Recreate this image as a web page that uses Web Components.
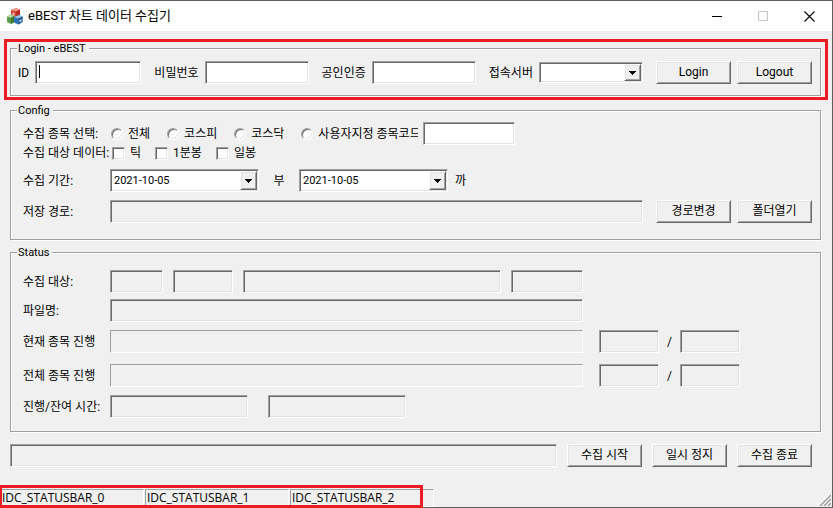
<!DOCTYPE html>
<html lang="ko">
<head>
<meta charset="utf-8">
<title>eBEST 차트 데이터 수집기</title>
<style>
  body {
    margin: 0;
    background: #f0f0f0;
    color: #000;
    font: 12px/16px Roboto, "Noto Sans CJK KR", sans-serif;
  }
</style>
</head>
<body>
<collector-app></collector-app>

<script>
// bevels shared by every classic control
const BEVEL = `
  *, :host { box-sizing: border-box; }
  .sunken {
    border: 1px solid;
    border-color: #a0a0a0 #fff #fff #a0a0a0;
    box-shadow: inset 1px 1px 0 #696969, inset -1px -1px 0 #e3e3e3;
  }
  .raised {
    border: 1px solid;
    border-color: #fff #696969 #696969 #fff;
    box-shadow: inset 1px 1px 0 #e3e3e3, inset -1px -1px 0 #a0a0a0;
  }
`;

class TitleBar extends HTMLElement {
  constructor() {
    super();
    this.attachShadow({ mode: 'open' });
  }

  connectedCallback() {
    this.shadowRoot.innerHTML = `
      <style>
        :host { display: flex; align-items: center; height: 30px; padding-left: 6px; background: #fff; }
        h1 { flex: 1; margin: 0 0 0 5px; font-size: 13px; font-weight: normal; line-height: 16px; }
        button { display: flex; align-items: center; justify-content: center; width: 46px; height: 30px; padding: 0; border: 0; background: none; }
        .logo { width: 17px; height: 17px; }
      </style>
      <svg class="logo" viewBox="0 0 17 17">
        <path d="M5 2l5-2 4 1.500v6l-4 2.500-5-2z" fill="#d8412f"/>
        <path d="M5 2l5-2 4 1.500-4 2z" fill="#f3a094"/>
        <path d="M10 3.500l4-2v6l-4 2.500z" fill="#b52a1e"/>
        <path d="M6.500 4.500l2 .5v3l-2-.5z" fill="#f6c3bb"/>
        <path d="M1 8.500l4-2 3 1.500v6l-3 2-4-2z" fill="#5d9c46"/>
        <path d="M1 8.500l4-2 3 1.500-3 2z" fill="#b5d9a3"/>
        <path d="M5 10l3-2v6l-3 2z" fill="#3c7a2b"/>
        <path d="M8 9l5-2 3.500 1.500v5.500l-4 2.500-4.500-2z" fill="#2f74b5"/>
        <path d="M8 9l5-2 3.500 1.500-4 2z" fill="#9cc6ea"/>
        <path d="M12.500 10.500l4-2v5.500l-4 2.500z" fill="#1f568f"/>
        <path d="M13.500 12l2-1v2.500l-2 1z" fill="#b9d6ef"/>
      </svg>
      <h1><slot></slot></h1>
      <button aria-label="최소화"><svg width="11" height="11"><path d="M0 5.500h10" stroke="#000"/></svg></button>
      <button aria-label="최대화" disabled><svg width="11" height="11"><path d="M.5.5h9v9h-9z" fill="none" stroke="#c4c4c4"/></svg></button>
      <button aria-label="닫기"><svg width="11" height="11"><path d="M.5.5l10 10M10.500.5l-10 10" stroke="#000" stroke-width="1.100"/></svg></button>
    `;
  }
}
customElements.define('title-bar', TitleBar);

class GroupBox extends HTMLElement {
  constructor() {
    super();
    this.attachShadow({ mode: 'open' });
  }

  connectedCallback() {
    this.shadowRoot.innerHTML = `
      <style>
        :host { display: block; }
        fieldset {
          min-width: 0;
          margin: 0;
          padding: 0 0 0 6px;
          border: 1px solid #a0a0a0;
          box-shadow: 1px 1px 0 #fff, inset 1px 1px 0 #fff;
        }
        legend { height: 13px; padding: 0 3px 0 1px; background: #f0f0f0; font-size: 11px; line-height: 14px; }
        .body { padding: var(--group-padding, 6px 8px 11px 1px); }
      </style>
      <fieldset>
        <legend>${this.getAttribute('caption')}</legend>
        <div class="body"><slot></slot></div>
      </fieldset>
    `;
  }
}
customElements.define('group-box', GroupBox);

class PushButton extends HTMLElement {
  constructor() {
    super();
    this.attachShadow({ mode: 'open' });
  }

  connectedCallback() {
    this.shadowRoot.innerHTML = `
      <style>
        ${BEVEL}
        :host { display: block; flex: none; width: 75px; }
        button { display: block; width: 100%; height: 23px; padding: 0 0 2px; background: #f0f0f0; color: inherit; font: inherit; }
      </style>
      <button class="raised"><slot></slot></button>
    `;
  }
}
customElements.define('push-button', PushButton);

// caption + text box; "readonly" gives the grey display field
class TextField extends HTMLElement {
  constructor() {
    super();
    this.attachShadow({ mode: 'open' });
  }

  connectedCallback() {
    const label = this.getAttribute('label');
    const readonly = this.hasAttribute('readonly');
    this.shadowRoot.innerHTML = `
      <style>
        ${BEVEL}
        :host { display: flex; align-items: center; gap: 6px; }
        label { flex: none; }
        .box { display: flex; flex: 1; align-items: center; min-width: 0; height: 23px; background: #fff; }
        .box.gray { background: #f0f0f0; }
        input { flex: 1; min-width: 0; width: 100%; height: 19px; padding: 0 3px; border: 0; outline: 0; background: none; font: inherit; }
        .caret { flex: none; width: 1px; height: 13px; margin: 0 0 2px 3px; background: #000; }
      </style>
      ${label ? `<label for="field">${label}</label>` : ''}
      <span class="box sunken ${readonly ? 'gray' : ''}">
        ${this.hasAttribute('caret') ? '<i class="caret"></i>' : ''}
        <input id="field" type="${this.getAttribute('type') || 'text'}" ${readonly ? 'readonly' : ''} aria-label="${label || this.getAttribute('name')}">
      </span>
    `;
  }
}
customElements.define('text-field', TextField);

class ComboField extends HTMLElement {
  constructor() {
    super();
    this.attachShadow({ mode: 'open' });
  }

  connectedCallback() {
    const label = this.getAttribute('label');
    const value = this.getAttribute('value') || '';
    this.shadowRoot.innerHTML = `
      <style>
        ${BEVEL}
        :host { display: flex; align-items: center; gap: 6px; }
        label { flex: none; }
        .box { display: grid; flex: 1; min-width: 0; height: var(--combo-height, 23px); padding: 1px; background: #fff; }
        select { grid-area: 1 / 1; width: 100%; min-width: 0; padding: 0 18px 0 2px; border: 0; outline: 0; appearance: none; background: none; color: #000; font: inherit; font-size: 11px; }
        .arrow { grid-area: 1 / 1; justify-self: end; display: flex; align-items: center; justify-content: center; width: 17px; background: #f0f0f0; pointer-events: none; }
      </style>
      ${label ? `<label for="combo">${label}</label>` : ''}
      <span class="box sunken">
        <select id="combo" aria-label="${label || this.getAttribute('name')}"><option>${value}</option></select>
        <span class="arrow raised"><svg width="7" height="4" shape-rendering="crispEdges"><path d="M0 0h7v1H6v1H5v1H4v1H3V3H2V2H1V1H0z"/></svg></span>
      </span>
    `;
  }
}
customElements.define('combo-field', ComboField);

class ChoiceItem extends HTMLElement {
  constructor() {
    super();
    this.attachShadow({ mode: 'open' });
  }

  connectedCallback() {
    this.shadowRoot.innerHTML = `
      <style>
        ${BEVEL}
        :host { display: block; flex: none; }
        label { display: flex; align-items: center; gap: 5px; }
        input { flex: none; width: 13px; height: 13px; margin: 0; appearance: none; background: #fff; }
        input[type=radio] { width: 12px; height: 12px; border-radius: 50%; }
        span { overflow: hidden; max-width: 100px; white-space: nowrap; }
      </style>
      <label><input class="sunken" type="${this.getAttribute('type')}"><span><slot></slot></span></label>
    `;
  }
}
customElements.define('choice-item', ChoiceItem);

class ProgressLine extends HTMLElement {
  constructor() {
    super();
    this.attachShadow({ mode: 'open' });
  }

  connectedCallback() {
    this.shadowRoot.innerHTML = `
      <style>
        :host { display: block; }
        progress { display: block; box-sizing: border-box; width: 100%; height: 23px; appearance: none; border: 1px solid; border-color: #a0a0a0 #fff #fff #a0a0a0; background: #f0f0f0; }
        progress::-webkit-progress-bar { background: #f0f0f0; }
        progress::-webkit-progress-value { background: #0078d7; }
      </style>
      <progress value="0" max="100" aria-label="${this.getAttribute('name')}"></progress>
    `;
  }
}
customElements.define('progress-line', ProgressLine);

class StatusBar extends HTMLElement {
  constructor() {
    super();
    this.attachShadow({ mode: 'open' });
  }

  connectedCallback() {
    const panes = this.getAttribute('panes').split(',');
    this.shadowRoot.innerHTML = `
      <style>
        *, :host { box-sizing: border-box; }
        :host { display: flex; align-items: flex-end; justify-content: space-between; }
        .panes { position: relative; display: flex; gap: 1px; }
        .pane { width: 144px; height: 18px; padding-left: 1px; border: 1px solid; border-color: #a0a0a0 #fff #fff #a0a0a0; font: 12px/16px "Open Sans", sans-serif; }
        .mark { position: absolute; inset: -4px 11px -1px 0; border: 3px solid #ed1c24; border-left-width: 2px; }
        svg { display: block; margin: 0 1px 1px 0; }
      </style>
      <div class="panes">
        ${panes.map(p => `<div class="pane">${p}</div>`).join('')}
        <div class="mark"></div>
      </div>
      <svg width="12" height="12">
        <path d="M0 11.500L11.500 0M4 11.500L11.500 4M8 11.500L11.500 8" stroke="#fff"/>
        <path d="M1 12L12 1M5 12l7-7M9 12l3-3" stroke="#a0a0a0" stroke-width="1.500"/>
      </svg>
    `;
  }
}
customElements.define('status-bar', StatusBar);

class CollectorApp extends HTMLElement {
  constructor() {
    super();
    this.attachShadow({ mode: 'open' });
  }

  connectedCallback() {
    this.shadowRoot.innerHTML = `
      <style>
        *, :host { box-sizing: border-box; }
        :host {
          display: flex;
          flex-direction: column;
          min-height: 100vh;
          border: 1px solid #5f5f5f;
          border-left: 0;
        }
        main { flex: 1; }
        .mark { margin: 8px 4px 4px; padding: 0 4px 1px 3px; border: 3px solid #ed1c24; }
        .config, .status { margin: 0 11px 6px 10px; }
        .config { --group-padding: 5px 8px 16px 6px; }
        .status { --group-padding: 11px 8px 13px 6px; }

        .row { display: flex; align-items: center; }
        .row > .name { flex: none; width: 87px; white-space: nowrap; }
        .login {
          display: grid;
          grid-template-columns: minmax(0, 124fr) minmax(0, 155fr) minmax(0, 155fr) minmax(0, 155fr) auto;
          gap: 13px;
        }
        .login combo-field { --combo-height: 21px; }
        .buttons { display: flex; gap: 6px; }

        .radios { height: 23px; }
        .checks { height: 16px; margin-bottom: 8px; }
        .choices { display: flex; align-items: center; }
        .radios .choices { gap: 17px; padding-left: 1px; }
        .checks .choices { gap: 14px; padding-left: 2px; }
        .code { width: 92px; margin-left: 5px; }
        .period { margin-bottom: 8px; }
        .period combo-field { width: 149px; }
        .from { width: 40px; text-align: center; }
        .to { padding-left: 7px; }
        .path text-field { flex: 1; margin-right: 13px; }

        .line { display: grid; grid-template-columns: 87px 1fr 213px; align-items: center; white-space: nowrap; }
        .line .main { display: flex; gap: 10px; margin-right: 16px; }
        .main > * { flex: 1; }
        .main > .w53 { flex: none; width: 53px; }
        .main > .w60 { flex: none; width: 60px; }
        .main > .w72 { flex: none; width: 72px; }
        .times .main { gap: 20px; }
        .times .main > * { flex: none; width: 138px; }
        .count { display: grid; grid-template-columns: 60px 21px 60px; text-align: center; align-items: center; }
        .gap6 { margin-top: 6px; }
        .gap8 { margin-top: 8px; }
        .gap11 { margin-top: 11px; }

        .actions { display: flex; gap: 10px; margin: 12px 20px 0 10px; }
        .actions text-field { flex: 1; }
      </style>
      <title-bar>eBEST 차트 데이터 수집기</title-bar>
      <main>
        <div class="mark">
          <group-box caption="Login - eBEST">
            <div class="row login">
              <text-field label="ID" caret></text-field>
              <text-field label="비밀번호" type="password"></text-field>
              <text-field label="공인인증" type="password"></text-field>
              <combo-field label="접속서버"></combo-field>
              <div class="buttons">
                <push-button>Login</push-button>
                <push-button>Logout</push-button>
              </div>
            </div>
          </group-box>
        </div>

        <group-box class="config" caption="Config">
          <div class="row radios">
            <span class="name">수집 종목 선택:</span>
            <div class="choices">
              <choice-item type="radio">전체</choice-item>
              <choice-item type="radio">코스피</choice-item>
              <choice-item type="radio">코스닥</choice-item>
              <choice-item type="radio">사용자지정 종목코드</choice-item>
            </div>
            <text-field class="code" name="종목코드"></text-field>
          </div>
          <div class="row checks">
            <span class="name">수집 대상 데이터:</span>
            <div class="choices">
              <choice-item type="checkbox">틱</choice-item>
              <choice-item type="checkbox">1분봉</choice-item>
              <choice-item type="checkbox">일봉</choice-item>
            </div>
          </div>
          <div class="row period">
            <span class="name">수집 기간:</span>
            <combo-field name="시작일" value="2021-10-05"></combo-field>
            <span class="from">부</span>
            <combo-field name="종료일" value="2021-10-05"></combo-field>
            <span class="to">까</span>
          </div>
          <div class="row path">
            <span class="name">저장 경로:</span>
            <text-field name="저장 경로" readonly></text-field>
            <div class="buttons">
              <push-button>경로변경</push-button>
              <push-button>폴더열기</push-button>
            </div>
          </div>
        </group-box>

        <group-box class="status" caption="Status">
          <div class="line">
            <span>수집 대상:</span>
            <div class="main">
              <text-field class="w53" name="구분" readonly></text-field>
              <text-field class="w60" name="종목코드" readonly></text-field>
              <text-field name="종목명" readonly></text-field>
              <text-field class="w72" name="데이터" readonly></text-field>
            </div>
          </div>
          <div class="line gap6">
            <span>파일명:</span>
            <div class="main"><text-field name="파일명" readonly></text-field></div>
          </div>
          <div class="line gap8">
            <span>현재 종목 진행</span>
            <div class="main"><progress-line name="현재 종목 진행"></progress-line></div>
            <div class="count">
              <text-field name="현재" readonly></text-field><span>/</span><text-field name="전체" readonly></text-field>
            </div>
          </div>
          <div class="line gap11">
            <span>전체 종목 진행</span>
            <div class="main"><progress-line name="전체 종목 진행"></progress-line></div>
            <div class="count">
              <text-field name="현재" readonly></text-field><span>/</span><text-field name="전체" readonly></text-field>
            </div>
          </div>
          <div class="line times gap8">
            <span>진행/잔여 시간:</span>
            <div class="main">
              <text-field name="진행 시간" readonly></text-field>
              <text-field name="잔여 시간" readonly></text-field>
            </div>
          </div>
        </group-box>

        <div class="actions">
          <text-field name="메시지" readonly></text-field>
          <push-button>수집 시작</push-button>
          <push-button>일시 정지</push-button>
          <push-button>수집 종료</push-button>
        </div>
      </main>
      <status-bar panes="IDC_STATUSBAR_0,IDC_STATUSBAR_1,IDC_STATUSBAR_2"></status-bar>
    `;
  }
}
customElements.define('collector-app', CollectorApp);
</script>
</body>
</html>
